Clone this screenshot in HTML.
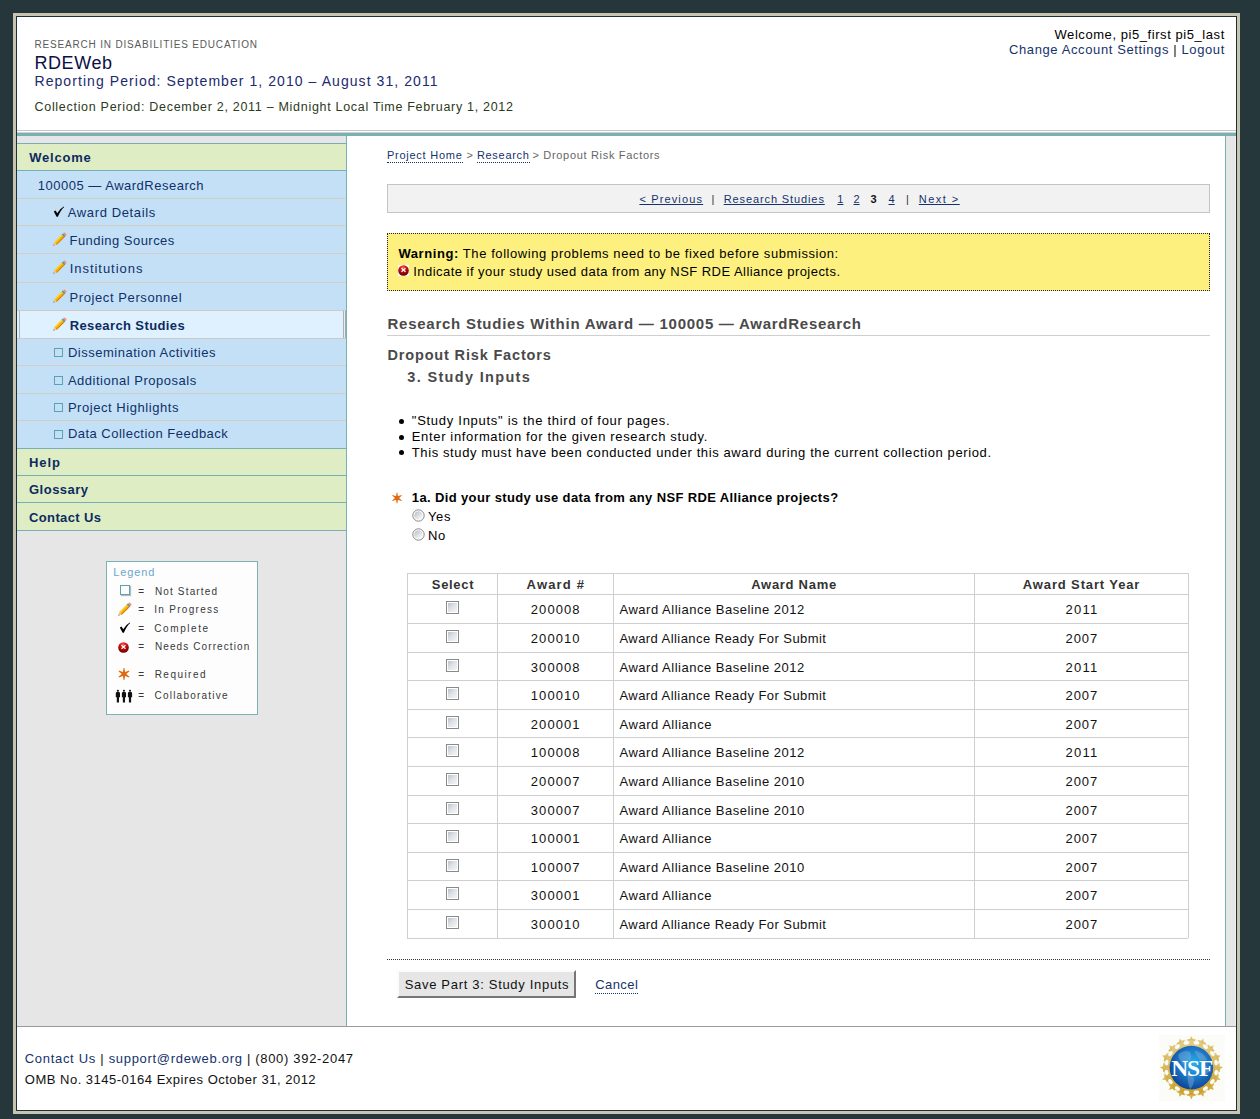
<!DOCTYPE html>
<html><head><meta charset="utf-8">
<style>
html,body{margin:0;padding:0;}
body{width:1260px;height:1119px;background:#25373b;position:relative;overflow:hidden;font-family:"Liberation Sans",sans-serif;}
.a{position:absolute;}
.t{position:absolute;white-space:pre;font-family:"Liberation Sans",sans-serif;}
.sep{position:absolute;left:17px;width:329px;height:1px;background:#d4cdc3;}
.tl{position:absolute;left:17px;width:329px;height:1px;background:#77b0b4;}
.cb{position:absolute;left:446px;width:11px;height:11px;border:1px solid #888b8b;background:#fff;}
.cb:after{content:"";position:absolute;left:1px;top:1px;width:9px;height:9px;background:linear-gradient(135deg,#bcc2cc,#dfe2e6 45%,#f5f5f5);}
.rl{position:absolute;left:407px;width:781px;height:1px;background:#cfcfcf;}
.cl{position:absolute;top:573px;width:1px;height:365px;background:#cfcfcf;}
</style></head><body>
<!-- page frame -->
<div class="a" style="left:13px;top:13px;width:1227px;height:1101px;background:#c7c4b1;"></div>
<div class="a" style="left:16px;top:16px;width:1221px;height:1095px;background:#1d3035;"></div>
<div class="a" style="left:17px;top:17px;width:1219px;height:1093px;background:#fff;"></div>
<!-- header lines -->
<div class="a" style="left:17px;top:130px;width:1219px;height:1px;background:#c6c6c6;"></div>
<div class="a" style="left:17px;top:132px;width:1219px;height:1px;background:#d6cfcf;"></div>
<div class="a" style="left:17px;top:133px;width:1219px;height:3px;background:#77b1b4;"></div>
<!-- main area -->
<div class="a" style="left:17px;top:136px;width:1219px;height:890px;background:#e6e6e6;"></div>
<div class="a" style="left:346px;top:136px;width:1px;height:890px;background:#77b1b4;"></div>
<div class="a" style="left:347px;top:136px;width:878px;height:890px;background:#fff;"></div>
<div class="a" style="left:1225px;top:136px;width:1px;height:890px;background:#77b1b4;"></div>
<div class="a" style="left:1235px;top:136px;width:1px;height:890px;background:#f2eeee;"></div>
<!-- footer line -->
<div class="a" style="left:17px;top:1026px;width:1219px;height:1px;background:#9a9a9a;"></div>

<!-- sidebar -->
<div class="a" style="left:17px;top:144px;width:329px;height:26px;background:#dfedc5;"></div>
<div class="a" style="left:17px;top:171px;width:329px;height:277px;background:#c3e0f6;"></div>
<div class="a" style="left:17px;top:449px;width:329px;height:81px;background:#dfedc5;"></div>
<div class="tl" style="top:143px"></div>
<div class="tl" style="top:170px"></div>
<div class="tl" style="top:448px"></div>
<div class="tl" style="top:475px"></div>
<div class="tl" style="top:502px"></div>
<div class="tl" style="top:530px"></div>
<div class="sep" style="top:198px"></div>
<div class="sep" style="top:225px"></div>
<div class="sep" style="top:253px"></div>
<div class="sep" style="top:282px"></div>
<div class="sep" style="top:365px"></div>
<div class="sep" style="top:393px"></div>
<div class="sep" style="top:420px"></div>
<!-- active row -->
<div class="a" style="left:17px;top:310px;width:329px;height:29px;background:#dff0fe;"></div>
<div class="a" style="left:17px;top:310px;width:329px;height:1px;background:#cfcac4;"></div>
<div class="a" style="left:17px;top:338px;width:329px;height:1px;background:#cfcac4;"></div>
<div class="a" style="left:19px;top:311px;width:1px;height:27px;background:#b4b4b4;"></div>
<div class="a" style="left:343px;top:311px;width:1px;height:27px;background:#b0b0b0;"></div>
<div class="a" style="left:345px;top:311px;width:1px;height:27px;background:#a8a8a8;"></div>

<!-- sidebar icons -->
<svg class="a" style="left:53px;top:206px" width="12" height="12" viewBox="0 0 12 12"><path d="M0.8 5.6 L2.6 4.6 L4.2 7.2 Q6.8 2.6 10.8 0.4 L11.2 1.0 Q7.6 4.2 4.9 10.8 L3.6 10.8 Z" fill="#000"/></svg>
<svg class="a" style="left:52.5px;top:231.5px" width="14" height="14" viewBox="0 0 14 14">
<g transform="translate(7,7) rotate(-45)">
<path d="M-9.4 0 L-6.4 -1.8 L-6.4 1.8 Z" fill="#e6c8a0"/>
<path d="M-9.4 0 L-8.2 -0.75 L-8.2 0.75 Z" fill="#707070"/>
<rect x="-6.4" y="-1.8" width="10.8" height="3.6" fill="#f5b400"/>
<rect x="-6.4" y="-1.8" width="10.8" height="1.0" fill="#ffd84a"/>
<rect x="-6.4" y="0.9" width="10.8" height="0.9" fill="#d8780c"/>
<rect x="4.4" y="-1.8" width="1.5" height="3.6" fill="#4a8ea0"/>
<rect x="5.8" y="-1.8" width="2.2" height="3.6" rx="1.2" fill="#f0906a"/>
</g></svg><svg class="a" style="left:52.5px;top:260px" width="14" height="14" viewBox="0 0 14 14">
<g transform="translate(7,7) rotate(-45)">
<path d="M-9.4 0 L-6.4 -1.8 L-6.4 1.8 Z" fill="#e6c8a0"/>
<path d="M-9.4 0 L-8.2 -0.75 L-8.2 0.75 Z" fill="#707070"/>
<rect x="-6.4" y="-1.8" width="10.8" height="3.6" fill="#f5b400"/>
<rect x="-6.4" y="-1.8" width="10.8" height="1.0" fill="#ffd84a"/>
<rect x="-6.4" y="0.9" width="10.8" height="0.9" fill="#d8780c"/>
<rect x="4.4" y="-1.8" width="1.5" height="3.6" fill="#4a8ea0"/>
<rect x="5.8" y="-1.8" width="2.2" height="3.6" rx="1.2" fill="#f0906a"/>
</g></svg><svg class="a" style="left:52.5px;top:288.5px" width="14" height="14" viewBox="0 0 14 14">
<g transform="translate(7,7) rotate(-45)">
<path d="M-9.4 0 L-6.4 -1.8 L-6.4 1.8 Z" fill="#e6c8a0"/>
<path d="M-9.4 0 L-8.2 -0.75 L-8.2 0.75 Z" fill="#707070"/>
<rect x="-6.4" y="-1.8" width="10.8" height="3.6" fill="#f5b400"/>
<rect x="-6.4" y="-1.8" width="10.8" height="1.0" fill="#ffd84a"/>
<rect x="-6.4" y="0.9" width="10.8" height="0.9" fill="#d8780c"/>
<rect x="4.4" y="-1.8" width="1.5" height="3.6" fill="#4a8ea0"/>
<rect x="5.8" y="-1.8" width="2.2" height="3.6" rx="1.2" fill="#f0906a"/>
</g></svg><svg class="a" style="left:52.5px;top:317px" width="14" height="14" viewBox="0 0 14 14">
<g transform="translate(7,7) rotate(-45)">
<path d="M-9.4 0 L-6.4 -1.8 L-6.4 1.8 Z" fill="#e6c8a0"/>
<path d="M-9.4 0 L-8.2 -0.75 L-8.2 0.75 Z" fill="#707070"/>
<rect x="-6.4" y="-1.8" width="10.8" height="3.6" fill="#f5b400"/>
<rect x="-6.4" y="-1.8" width="10.8" height="1.0" fill="#ffd84a"/>
<rect x="-6.4" y="0.9" width="10.8" height="0.9" fill="#d8780c"/>
<rect x="4.4" y="-1.8" width="1.5" height="3.6" fill="#4a8ea0"/>
<rect x="5.8" y="-1.8" width="2.2" height="3.6" rx="1.2" fill="#f0906a"/>
</g></svg>

<!-- legend -->
<div class="a" style="left:106px;top:561px;width:150px;height:152px;border:1px solid #7ab2b8;background:#fdfdfd;"></div>

<!-- content boxes -->
<div class="a" style="left:387px;top:184px;width:821px;height:27px;border:1px solid #c4c4c4;background:#f2f2f2;"></div>
<div class="a" style="left:387px;top:233px;width:821px;height:56px;border:1px dotted #222;background:#fdf07f;"></div>
<div class="a" style="left:387px;top:335px;width:823px;height:1px;background:#cfcfcf;"></div>

<!-- table -->
<div class="rl" style="top:573px"></div>
<div class="rl" style="top:594px"></div><div class="rl" style="top:623px"></div><div class="rl" style="top:652px"></div><div class="rl" style="top:680px"></div><div class="rl" style="top:709px"></div><div class="rl" style="top:737px"></div><div class="rl" style="top:766px"></div><div class="rl" style="top:795px"></div><div class="rl" style="top:823px"></div><div class="rl" style="top:852px"></div><div class="rl" style="top:880px"></div><div class="rl" style="top:909px"></div><div class="rl" style="top:938px"></div>
<div class="cl" style="left:407px"></div>
<div class="cl" style="left:497px"></div>
<div class="cl" style="left:613px"></div>
<div class="cl" style="left:974px"></div>
<div class="cl" style="left:1188px"></div>
<div class="cb" style="top:601px"></div><div class="cb" style="top:630px"></div><div class="cb" style="top:659px"></div><div class="cb" style="top:687px"></div><div class="cb" style="top:716px"></div><div class="cb" style="top:744px"></div><div class="cb" style="top:773px"></div><div class="cb" style="top:802px"></div><div class="cb" style="top:830px"></div><div class="cb" style="top:859px"></div><div class="cb" style="top:887px"></div><div class="cb" style="top:916px"></div>

<!-- dotted line -->
<div class="a" style="left:387px;top:959px;width:823px;height:0;border-top:1px dotted #333;"></div>
<!-- button -->
<div class="a" style="left:397px;top:970px;width:175px;height:24px;border-style:solid;border-width:2px;border-color:#fbfbfb #767676 #767676 #fbfbfb;background:#e6e6e6;"></div>

<div class="a" style="left:54px;top:348px;width:7px;height:7px;border:1px solid #5aa3ad;"></div>
<div class="a" style="left:54px;top:375.5px;width:7px;height:7px;border:1px solid #5aa3ad;"></div>
<div class="a" style="left:54px;top:403px;width:7px;height:7px;border:1px solid #5aa3ad;"></div>
<div class="a" style="left:54px;top:430px;width:7px;height:7px;border:1px solid #5aa3ad;"></div>
<svg class="a" style="left:398px;top:265px" width="11" height="11" viewBox="0 0 11 11">
<defs><radialGradient id="rg398265" cx="0.45" cy="0.25" r="0.8"><stop offset="0" stop-color="#ff6a6a"/><stop offset="0.35" stop-color="#d41212"/><stop offset="0.75" stop-color="#8a0202"/><stop offset="1" stop-color="#4a0000"/></radialGradient></defs>
<rect width="11" height="11" fill="#fff"/><circle cx="5.5" cy="5.5" r="5.3" fill="url(#rg398265)"/>
<path d="M3.5 3.3 L7.5 6.7 M7.5 3.3 L3.5 6.7" stroke="#fff" stroke-width="1.2"/></svg>
<svg class="a" style="left:389.4px;top:490.3px" width="16" height="16" viewBox="-8 -8 16 16"><g fill="#e06a10"><polygon points="0.30,-5.40 1.30,0.00 0.30,5.40 -0.30,5.40 -1.30,-0.00 -0.30,-5.40"/><polygon points="4.83,-2.44 0.65,1.13 -4.53,2.96 -4.83,2.44 -0.65,-1.13 4.53,-2.96"/><polygon points="4.53,2.96 -0.65,1.13 -4.83,-2.44 -4.53,-2.96 0.65,-1.13 4.83,2.44"/><circle r="1.95"/></g></svg>
<svg class="a" style="left:412.0px;top:509.0px" width="13" height="13" viewBox="0 0 13 13">
<defs><linearGradient id="rd515.5" x1="0.2" y1="0.15" x2="0.8" y2="0.85"><stop offset="0" stop-color="#c3c8d0"/><stop offset="1" stop-color="#f7f7f7"/></linearGradient></defs>
<circle cx="6.5" cy="6.5" r="5.7" fill="#fff" stroke="#878787" stroke-width="1"/>
<circle cx="6.5" cy="6.5" r="4.3" fill="url(#rd515.5)"/></svg>
<svg class="a" style="left:412.0px;top:528.0px" width="13" height="13" viewBox="0 0 13 13">
<defs><linearGradient id="rd534.5" x1="0.2" y1="0.15" x2="0.8" y2="0.85"><stop offset="0" stop-color="#c3c8d0"/><stop offset="1" stop-color="#f7f7f7"/></linearGradient></defs>
<circle cx="6.5" cy="6.5" r="5.7" fill="#fff" stroke="#878787" stroke-width="1"/>
<circle cx="6.5" cy="6.5" r="4.3" fill="url(#rd534.5)"/></svg>
<div class="a" style="left:399.4px;top:418.7px;width:5px;height:5px;border-radius:50%;background:#000;"></div>
<div class="a" style="left:399.4px;top:434.5px;width:5px;height:5px;border-radius:50%;background:#000;"></div>
<div class="a" style="left:399.4px;top:450.3px;width:5px;height:5px;border-radius:50%;background:#000;"></div>
<div class="a" style="left:120px;top:585px;width:8px;height:8px;border:1px solid #5aa3ad;box-shadow:1px 1px 1px #bbb;"></div>
<svg class="a" style="left:117.5px;top:602px" width="14" height="14" viewBox="0 0 14 14">
<g transform="translate(7,7) rotate(-45)">
<path d="M-9.4 0 L-6.4 -1.8 L-6.4 1.8 Z" fill="#e6c8a0"/>
<path d="M-9.4 0 L-8.2 -0.75 L-8.2 0.75 Z" fill="#707070"/>
<rect x="-6.4" y="-1.8" width="10.8" height="3.6" fill="#f5b400"/>
<rect x="-6.4" y="-1.8" width="10.8" height="1.0" fill="#ffd84a"/>
<rect x="-6.4" y="0.9" width="10.8" height="0.9" fill="#d8780c"/>
<rect x="4.4" y="-1.8" width="1.5" height="3.6" fill="#4a8ea0"/>
<rect x="5.8" y="-1.8" width="2.2" height="3.6" rx="1.2" fill="#f0906a"/>
</g></svg>
<svg class="a" style="left:118.5px;top:622px" width="12" height="12" viewBox="0 0 12 12"><path d="M0.8 5.6 L2.6 4.6 L4.2 7.2 Q6.8 2.6 10.8 0.4 L11.2 1.0 Q7.6 4.2 4.9 10.8 L3.6 10.8 Z" fill="#000"/></svg>
<svg class="a" style="left:118px;top:642px" width="11" height="11" viewBox="0 0 11 11">
<defs><radialGradient id="rg118642" cx="0.45" cy="0.25" r="0.8"><stop offset="0" stop-color="#ff6a6a"/><stop offset="0.35" stop-color="#d41212"/><stop offset="0.75" stop-color="#8a0202"/><stop offset="1" stop-color="#4a0000"/></radialGradient></defs>
<circle cx="5.5" cy="5.5" r="5.3" fill="url(#rg118642)"/>
<path d="M3.5 3.3 L7.5 6.7 M7.5 3.3 L3.5 6.7" stroke="#fff" stroke-width="1.2"/></svg>
<svg class="a" style="left:115.5px;top:666.3px" width="16" height="16" viewBox="-8 -8 16 16"><g fill="#e06a10"><polygon points="0.40,-6.10 1.50,0.00 0.40,6.10 -0.40,6.10 -1.50,-0.00 -0.40,-6.10"/><polygon points="5.48,-2.70 0.75,1.30 -5.08,3.40 -5.48,2.70 -0.75,-1.30 5.08,-3.40"/><polygon points="5.08,3.40 -0.75,1.30 -5.48,-2.70 -5.08,-3.40 0.75,-1.30 5.48,2.70"/><circle r="2.25"/></g></svg>
<svg class="a" style="left:115px;top:689.3px" width="19" height="14" viewBox="0 0 19 14"><g fill="#111"><ellipse cx="2.9" cy="1.7" rx="1.1" ry="1.0"/><path d="M0.7999999999999998 4.2 Q0.7999999999999998 3.1 1.9 3.1 H3.9 Q5.0 3.1 5.0 4.2 V8.3 H4.0 V13.4 H1.7999999999999998 V8.3 H0.7999999999999998 Z"/><ellipse cx="8.95" cy="1.7" rx="1.1" ry="1.0"/><path d="M6.85 4.2 Q6.85 3.1 7.949999999999999 3.1 H9.95 Q11.049999999999999 3.1 11.049999999999999 4.2 V8.3 H10.049999999999999 V13.4 H7.85 V8.3 H6.85 Z"/><ellipse cx="15.0" cy="1.7" rx="1.1" ry="1.0"/><path d="M12.9 4.2 Q12.9 3.1 14.0 3.1 H16.0 Q17.1 3.1 17.1 4.2 V8.3 H16.1 V13.4 H13.9 V8.3 H12.9 Z"/></g></svg>
<div class="a" style="left:1159px;top:1035px;width:66px;height:66px;background:#fbfbf8;"></div>
<svg class="a" style="left:0;top:0" width="1260" height="1119">
<defs><linearGradient id="gold" x1="0" y1="0" x2="0" y2="1"><stop offset="0" stop-color="#e2cc8a"/><stop offset="0.5" stop-color="#d8b95a"/><stop offset="1" stop-color="#c9a02a"/></linearGradient>
<radialGradient id="glb" cx="0.55" cy="0.4" r="0.65"><stop offset="0" stop-color="#22b4ec"/><stop offset="0.5" stop-color="#1c78c8"/><stop offset="1" stop-color="#0d3c8e"/></radialGradient></defs>
<g fill="url(#gold)"><polygon points="1191.40,1036.00 1192.81,1039.06 1196.16,1039.45 1193.68,1041.74 1194.34,1045.05 1191.40,1043.40 1188.46,1045.05 1189.12,1041.74 1186.64,1039.45 1189.99,1039.06"/><polygon points="1203.49,1038.41 1203.63,1041.77 1206.56,1043.42 1203.40,1044.58 1202.75,1047.89 1200.66,1045.24 1197.32,1045.64 1199.19,1042.84 1197.78,1039.78 1201.02,1040.69"/><polygon points="1213.74,1045.26 1212.58,1048.42 1214.66,1051.06 1211.30,1050.93 1209.43,1053.73 1208.51,1050.49 1205.27,1049.57 1208.07,1047.70 1207.94,1044.34 1210.58,1046.42"/><polygon points="1220.59,1055.51 1218.31,1057.98 1219.22,1061.22 1216.16,1059.81 1213.36,1061.68 1213.76,1058.34 1211.11,1056.25 1214.42,1055.60 1215.58,1052.44 1217.23,1055.37"/><polygon points="1223.00,1067.60 1219.94,1069.01 1219.55,1072.36 1217.26,1069.88 1213.95,1070.54 1215.60,1067.60 1213.95,1064.66 1217.26,1065.32 1219.55,1062.84 1219.94,1066.19"/><polygon points="1220.59,1079.69 1217.23,1079.83 1215.58,1082.76 1214.42,1079.60 1211.11,1078.95 1213.76,1076.86 1213.36,1073.52 1216.16,1075.39 1219.22,1073.98 1218.31,1077.22"/><polygon points="1213.74,1089.94 1210.58,1088.78 1207.94,1090.86 1208.07,1087.50 1205.27,1085.63 1208.51,1084.71 1209.43,1081.47 1211.30,1084.27 1214.66,1084.14 1212.58,1086.78"/><polygon points="1203.49,1096.79 1201.02,1094.51 1197.78,1095.42 1199.19,1092.36 1197.32,1089.56 1200.66,1089.96 1202.75,1087.31 1203.40,1090.62 1206.56,1091.78 1203.63,1093.43"/><polygon points="1191.40,1099.20 1189.99,1096.14 1186.64,1095.75 1189.12,1093.46 1188.46,1090.15 1191.40,1091.80 1194.34,1090.15 1193.68,1093.46 1196.16,1095.75 1192.81,1096.14"/><polygon points="1179.31,1096.79 1179.17,1093.43 1176.24,1091.78 1179.40,1090.62 1180.05,1087.31 1182.14,1089.96 1185.48,1089.56 1183.61,1092.36 1185.02,1095.42 1181.78,1094.51"/><polygon points="1169.06,1089.94 1170.22,1086.78 1168.14,1084.14 1171.50,1084.27 1173.37,1081.47 1174.29,1084.71 1177.53,1085.63 1174.73,1087.50 1174.86,1090.86 1172.22,1088.78"/><polygon points="1162.21,1079.69 1164.49,1077.22 1163.58,1073.98 1166.64,1075.39 1169.44,1073.52 1169.04,1076.86 1171.69,1078.95 1168.38,1079.60 1167.22,1082.76 1165.57,1079.83"/><polygon points="1159.80,1067.60 1162.86,1066.19 1163.25,1062.84 1165.54,1065.32 1168.85,1064.66 1167.20,1067.60 1168.85,1070.54 1165.54,1069.88 1163.25,1072.36 1162.86,1069.01"/><polygon points="1162.21,1055.51 1165.57,1055.37 1167.22,1052.44 1168.38,1055.60 1171.69,1056.25 1169.04,1058.34 1169.44,1061.68 1166.64,1059.81 1163.58,1061.22 1164.49,1057.98"/><polygon points="1169.06,1045.26 1172.22,1046.42 1174.86,1044.34 1174.73,1047.70 1177.53,1049.57 1174.29,1050.49 1173.37,1053.73 1171.50,1050.93 1168.14,1051.06 1170.22,1048.42"/><polygon points="1179.31,1038.41 1181.78,1040.69 1185.02,1039.78 1183.61,1042.84 1185.48,1045.64 1182.14,1045.24 1180.05,1047.89 1179.40,1044.58 1176.24,1043.42 1179.17,1041.77"/><circle cx="1191.4" cy="1067.6" r="27.4"/></g>
<g fill="#fbfbf8"><ellipse cx="1196.32" cy="1042.88" rx="2.9" ry="1.8" transform="rotate(11.2 1196.32 1042.88)"/><ellipse cx="1205.40" cy="1046.65" rx="2.9" ry="1.8" transform="rotate(33.8 1205.40 1046.65)"/><ellipse cx="1212.35" cy="1053.60" rx="2.9" ry="1.8" transform="rotate(56.2 1212.35 1053.60)"/><ellipse cx="1216.12" cy="1062.68" rx="2.9" ry="1.8" transform="rotate(78.8 1216.12 1062.68)"/><ellipse cx="1216.12" cy="1072.52" rx="2.9" ry="1.8" transform="rotate(101.2 1216.12 1072.52)"/><ellipse cx="1212.35" cy="1081.60" rx="2.9" ry="1.8" transform="rotate(123.8 1212.35 1081.60)"/><ellipse cx="1205.40" cy="1088.55" rx="2.9" ry="1.8" transform="rotate(146.2 1205.40 1088.55)"/><ellipse cx="1196.32" cy="1092.32" rx="2.9" ry="1.8" transform="rotate(168.8 1196.32 1092.32)"/><ellipse cx="1186.48" cy="1092.32" rx="2.9" ry="1.8" transform="rotate(191.2 1186.48 1092.32)"/><ellipse cx="1177.40" cy="1088.55" rx="2.9" ry="1.8" transform="rotate(213.8 1177.40 1088.55)"/><ellipse cx="1170.45" cy="1081.60" rx="2.9" ry="1.8" transform="rotate(236.2 1170.45 1081.60)"/><ellipse cx="1166.68" cy="1072.52" rx="2.9" ry="1.8" transform="rotate(258.8 1166.68 1072.52)"/><ellipse cx="1166.68" cy="1062.68" rx="2.9" ry="1.8" transform="rotate(281.2 1166.68 1062.68)"/><ellipse cx="1170.45" cy="1053.60" rx="2.9" ry="1.8" transform="rotate(303.8 1170.45 1053.60)"/><ellipse cx="1177.40" cy="1046.65" rx="2.9" ry="1.8" transform="rotate(326.2 1177.40 1046.65)"/><ellipse cx="1186.48" cy="1042.88" rx="2.9" ry="1.8" transform="rotate(348.8 1186.48 1042.88)"/></g>
<circle cx="1191.4" cy="1067.6" r="21.8" fill="url(#glb)"/>
<g fill="#8fb6dc" opacity="0.4">
<path d="M1178.4 1054.6 q5 -5 11 -3 q3 3 1 8 q-3 2 -5 6 q-3 -1 -4 -4 q-3 -2 -3 -7 z"/>
<path d="M1194.4 1050.6 q8 1 13 9 q-4 2 -8 0 q-3 -3 -5 -9 z"/>
<path d="M1187.4 1073.6 q6 1 7 6 q-1 6 -4 10 q-3 -6 -3 -16 z"/>
<path d="M1201.4 1063.6 q6 2 8 8 q-4 4 -6 2 q-3 -4 -2 -10 z"/>
</g>
<text x="1191.7" y="1075.8" text-anchor="middle" font-family="Liberation Serif" font-weight="bold" font-size="23.5" fill="#fff" letter-spacing="-1.2">NSF</text>
</svg>
<div class="t" style="left:34.50px;top:39px;font-size:10px;line-height:12px;color:#5a5a5a;letter-spacing:0.821px;">RESEARCH IN DISABILITIES EDUCATION</div>
<div class="t" style="left:34.50px;top:52px;font-size:18px;line-height:22px;color:#0d1046;letter-spacing:0.559px;">RDEWeb</div>
<div class="t" style="left:34.50px;top:73px;font-size:14px;line-height:17px;color:#1c2a6e;letter-spacing:1.064px;">Reporting Period: September 1, 2010 – August 31, 2011</div>
<div class="t" style="left:34.50px;top:100px;font-size:12.5px;line-height:15px;color:#2b3a20;letter-spacing:0.704px;">Collection Period: December 2, 2011 – Midnight Local Time February 1, 2012</div>
<div class="t" style="left:1054.50px;top:27px;font-size:13px;line-height:16px;color:#000;letter-spacing:0.565px;">Welcome, pi5_first pi5_last</div>
<div class="t" style="left:1009.00px;top:42px;font-size:13px;line-height:16px;color:#15336b;letter-spacing:0.610px;">Change Account Settings <span style="color:#111">|</span> Logout</div>
<div class="t" style="left:29.20px;top:150px;font-size:13px;line-height:16px;color:#0c2b5e;letter-spacing:0.793px;font-weight:bold;">Welcome</div>
<div class="t" style="left:37.80px;top:178px;font-size:13px;line-height:16px;color:#10306a;letter-spacing:0.503px;">100005 — AwardResearch</div>
<div class="t" style="left:67.80px;top:205px;font-size:13px;line-height:16px;color:#10306a;letter-spacing:0.619px;">Award Details</div>
<div class="t" style="left:69.50px;top:233px;font-size:13px;line-height:16px;color:#10306a;letter-spacing:0.466px;">Funding Sources</div>
<div class="t" style="left:69.70px;top:261px;font-size:13px;line-height:16px;color:#10306a;letter-spacing:0.959px;">Institutions</div>
<div class="t" style="left:69.50px;top:290px;font-size:13px;line-height:16px;color:#10306a;letter-spacing:0.592px;">Project Personnel</div>
<div class="t" style="left:69.70px;top:318px;font-size:13px;line-height:16px;color:#0c2b5e;letter-spacing:0.393px;font-weight:bold;">Research Studies</div>
<div class="t" style="left:67.90px;top:345px;font-size:13px;line-height:16px;color:#10306a;letter-spacing:0.507px;">Dissemination Activities</div>
<div class="t" style="left:67.90px;top:373px;font-size:13px;line-height:16px;color:#10306a;letter-spacing:0.514px;">Additional Proposals</div>
<div class="t" style="left:67.90px;top:400px;font-size:13px;line-height:16px;color:#10306a;letter-spacing:0.550px;">Project Highlights</div>
<div class="t" style="left:67.90px;top:426px;font-size:13px;line-height:16px;color:#10306a;letter-spacing:0.480px;">Data Collection Feedback</div>
<div class="t" style="left:29.00px;top:455px;font-size:13px;line-height:16px;color:#0c2b5e;letter-spacing:0.943px;font-weight:bold;">Help</div>
<div class="t" style="left:29.00px;top:482px;font-size:13px;line-height:16px;color:#0c2b5e;letter-spacing:0.492px;font-weight:bold;">Glossary</div>
<div class="t" style="left:29.00px;top:510px;font-size:13px;line-height:16px;color:#0c2b5e;letter-spacing:0.375px;font-weight:bold;">Contact Us</div>
<div class="t" style="left:113.20px;top:566px;font-size:11px;line-height:13px;color:#6aa7ce;letter-spacing:0.896px;">Legend</div>
<div class="t" style="left:154.90px;top:586px;font-size:10px;line-height:12px;color:#383838;letter-spacing:1.161px;">Not Started</div>
<div class="t" style="left:154.30px;top:604px;font-size:10px;line-height:12px;color:#383838;letter-spacing:1.286px;">In Progress</div>
<div class="t" style="left:154.30px;top:623px;font-size:10px;line-height:12px;color:#383838;letter-spacing:1.584px;">Complete</div>
<div class="t" style="left:154.90px;top:641px;font-size:10px;line-height:12px;color:#383838;letter-spacing:1.106px;">Needs Correction</div>
<div class="t" style="left:154.70px;top:669px;font-size:10px;line-height:12px;color:#383838;letter-spacing:1.458px;">Required</div>
<div class="t" style="left:154.50px;top:690px;font-size:10px;line-height:12px;color:#383838;letter-spacing:1.219px;">Collaborative</div>
<div class="t" style="left:138.20px;top:586px;font-size:10px;line-height:12px;color:#383838;letter-spacing:0.000px;">=</div>
<div class="t" style="left:138.20px;top:604px;font-size:10px;line-height:12px;color:#383838;letter-spacing:0.000px;">=</div>
<div class="t" style="left:138.20px;top:623px;font-size:10px;line-height:12px;color:#383838;letter-spacing:0.000px;">=</div>
<div class="t" style="left:138.20px;top:641px;font-size:10px;line-height:12px;color:#383838;letter-spacing:0.000px;">=</div>
<div class="t" style="left:138.20px;top:669px;font-size:10px;line-height:12px;color:#383838;letter-spacing:0.000px;">=</div>
<div class="t" style="left:138.20px;top:690px;font-size:10px;line-height:12px;color:#383838;letter-spacing:0.000px;">=</div>
<div class="t" style="left:386.90px;top:149px;font-size:11px;line-height:13px;color:#15336b;letter-spacing:0.751px;border-bottom:1px dotted #15336b;">Project Home</div>
<div class="t" style="left:466.50px;top:149px;font-size:11px;line-height:13px;color:#666;letter-spacing:0.000px;">&gt;</div>
<div class="t" style="left:476.90px;top:149px;font-size:11px;line-height:13px;color:#15336b;letter-spacing:0.703px;border-bottom:1px dotted #15336b;">Research</div>
<div class="t" style="left:532.50px;top:149px;font-size:11px;line-height:13px;color:#666;letter-spacing:0.681px;">&gt; Dropout Risk Factors</div>
<div class="t" style="left:639.40px;top:193px;font-size:11px;line-height:13px;color:#14336c;letter-spacing:1.147px;text-decoration:underline;text-underline-offset:1px;">&lt; Previous</div>
<div class="t" style="left:711.50px;top:193px;font-size:11px;line-height:13px;color:#333;letter-spacing:0.000px;">|</div>
<div class="t" style="left:723.70px;top:193px;font-size:11px;line-height:13px;color:#14336c;letter-spacing:0.891px;text-decoration:underline;text-underline-offset:1px;">Research Studies</div>
<div class="t" style="left:837.30px;top:193px;font-size:11px;line-height:13px;color:#14336c;letter-spacing:0.000px;text-decoration:underline;text-underline-offset:1px;">1</div>
<div class="t" style="left:853.50px;top:193px;font-size:11px;line-height:13px;color:#14336c;letter-spacing:0.000px;text-decoration:underline;text-underline-offset:1px;">2</div>
<div class="t" style="left:870.50px;top:193px;font-size:11px;line-height:13px;color:#111;letter-spacing:0.000px;font-weight:bold;">3</div>
<div class="t" style="left:888.50px;top:193px;font-size:11px;line-height:13px;color:#14336c;letter-spacing:0.000px;text-decoration:underline;text-underline-offset:1px;">4</div>
<div class="t" style="left:906.00px;top:193px;font-size:11px;line-height:13px;color:#333;letter-spacing:0.000px;">|</div>
<div class="t" style="left:918.80px;top:193px;font-size:11px;line-height:13px;color:#14336c;letter-spacing:1.478px;text-decoration:underline;text-underline-offset:1px;">Next &gt;</div>
<div class="t" style="left:398.40px;top:246px;font-size:13px;line-height:16px;color:#000;letter-spacing:0.577px;"><b>Warning:</b> The following problems need to be fixed before submission:</div>
<div class="t" style="left:413.30px;top:264px;font-size:13px;line-height:16px;color:#000;letter-spacing:0.459px;">Indicate if your study used data from any NSF RDE Alliance projects.</div>
<div class="t" style="left:387.50px;top:315px;font-size:15px;line-height:18px;color:#4a4a4a;letter-spacing:0.741px;font-weight:bold;">Research Studies Within Award — 100005 — AwardResearch</div>
<div class="t" style="left:387.50px;top:347px;font-size:14.5px;line-height:17px;color:#4a4a4a;letter-spacing:0.835px;font-weight:bold;">Dropout Risk Factors</div>
<div class="t" style="left:407.30px;top:369px;font-size:14.5px;line-height:17px;color:#4a4a4a;letter-spacing:1.327px;font-weight:bold;">3. Study Inputs</div>
<div class="t" style="left:411.80px;top:413px;font-size:13px;line-height:16px;color:#000;letter-spacing:0.722px;">"Study Inputs" is the third of four pages.</div>
<div class="t" style="left:411.80px;top:429px;font-size:13px;line-height:16px;color:#000;letter-spacing:0.648px;">Enter information for the given research study.</div>
<div class="t" style="left:411.80px;top:445px;font-size:13px;line-height:16px;color:#000;letter-spacing:0.605px;">This study must have been conducted under this award during the current collection period.</div>
<div class="t" style="left:411.80px;top:490px;font-size:13px;line-height:16px;color:#000;letter-spacing:0.370px;font-weight:bold;">1a. Did your study use data from any NSF RDE Alliance projects?</div>
<div class="t" style="left:428.00px;top:509px;font-size:13px;line-height:16px;color:#000;letter-spacing:0.591px;">Yes</div>
<div class="t" style="left:428.00px;top:528px;font-size:13px;line-height:16px;color:#000;letter-spacing:0.675px;">No</div>
<div class="t" style="left:431.80px;top:577px;font-size:13px;line-height:16px;color:#333;letter-spacing:0.677px;font-weight:bold;">Select</div>
<div class="t" style="left:526.60px;top:577px;font-size:13px;line-height:16px;color:#333;letter-spacing:1.176px;font-weight:bold;">Award #</div>
<div class="t" style="left:751.20px;top:577px;font-size:13px;line-height:16px;color:#333;letter-spacing:0.720px;font-weight:bold;">Award Name</div>
<div class="t" style="left:1022.80px;top:577px;font-size:13px;line-height:16px;color:#333;letter-spacing:0.868px;font-weight:bold;">Award Start Year</div>
<div class="t" style="left:530.80px;top:602px;font-size:13px;line-height:16px;color:#111;letter-spacing:1.062px;">200008</div>
<div class="t" style="left:619.50px;top:602px;font-size:13px;line-height:16px;color:#111;letter-spacing:0.509px;">Award Alliance Baseline 2012</div>
<div class="t" style="left:1065.50px;top:602px;font-size:13px;line-height:16px;color:#111;letter-spacing:1.244px;">2011</div>
<div class="t" style="left:530.80px;top:631px;font-size:13px;line-height:16px;color:#111;letter-spacing:1.062px;">200010</div>
<div class="t" style="left:619.50px;top:631px;font-size:13px;line-height:16px;color:#111;letter-spacing:0.433px;">Award Alliance Ready For Submit</div>
<div class="t" style="left:1065.50px;top:631px;font-size:13px;line-height:16px;color:#111;letter-spacing:0.926px;">2007</div>
<div class="t" style="left:530.80px;top:660px;font-size:13px;line-height:16px;color:#111;letter-spacing:1.062px;">300008</div>
<div class="t" style="left:619.50px;top:660px;font-size:13px;line-height:16px;color:#111;letter-spacing:0.509px;">Award Alliance Baseline 2012</div>
<div class="t" style="left:1065.50px;top:660px;font-size:13px;line-height:16px;color:#111;letter-spacing:1.244px;">2011</div>
<div class="t" style="left:530.80px;top:688px;font-size:13px;line-height:16px;color:#111;letter-spacing:1.062px;">100010</div>
<div class="t" style="left:619.50px;top:688px;font-size:13px;line-height:16px;color:#111;letter-spacing:0.433px;">Award Alliance Ready For Submit</div>
<div class="t" style="left:1065.50px;top:688px;font-size:13px;line-height:16px;color:#111;letter-spacing:0.926px;">2007</div>
<div class="t" style="left:530.80px;top:717px;font-size:13px;line-height:16px;color:#111;letter-spacing:1.062px;">200001</div>
<div class="t" style="left:619.50px;top:717px;font-size:13px;line-height:16px;color:#111;letter-spacing:0.527px;">Award Alliance</div>
<div class="t" style="left:1065.50px;top:717px;font-size:13px;line-height:16px;color:#111;letter-spacing:0.926px;">2007</div>
<div class="t" style="left:530.80px;top:745px;font-size:13px;line-height:16px;color:#111;letter-spacing:1.062px;">100008</div>
<div class="t" style="left:619.50px;top:745px;font-size:13px;line-height:16px;color:#111;letter-spacing:0.509px;">Award Alliance Baseline 2012</div>
<div class="t" style="left:1065.50px;top:745px;font-size:13px;line-height:16px;color:#111;letter-spacing:1.244px;">2011</div>
<div class="t" style="left:530.80px;top:774px;font-size:13px;line-height:16px;color:#111;letter-spacing:1.062px;">200007</div>
<div class="t" style="left:619.50px;top:774px;font-size:13px;line-height:16px;color:#111;letter-spacing:0.509px;">Award Alliance Baseline 2010</div>
<div class="t" style="left:1065.50px;top:774px;font-size:13px;line-height:16px;color:#111;letter-spacing:0.926px;">2007</div>
<div class="t" style="left:530.80px;top:803px;font-size:13px;line-height:16px;color:#111;letter-spacing:1.062px;">300007</div>
<div class="t" style="left:619.50px;top:803px;font-size:13px;line-height:16px;color:#111;letter-spacing:0.509px;">Award Alliance Baseline 2010</div>
<div class="t" style="left:1065.50px;top:803px;font-size:13px;line-height:16px;color:#111;letter-spacing:0.926px;">2007</div>
<div class="t" style="left:530.80px;top:831px;font-size:13px;line-height:16px;color:#111;letter-spacing:1.062px;">100001</div>
<div class="t" style="left:619.50px;top:831px;font-size:13px;line-height:16px;color:#111;letter-spacing:0.527px;">Award Alliance</div>
<div class="t" style="left:1065.50px;top:831px;font-size:13px;line-height:16px;color:#111;letter-spacing:0.926px;">2007</div>
<div class="t" style="left:530.80px;top:860px;font-size:13px;line-height:16px;color:#111;letter-spacing:1.062px;">100007</div>
<div class="t" style="left:619.50px;top:860px;font-size:13px;line-height:16px;color:#111;letter-spacing:0.509px;">Award Alliance Baseline 2010</div>
<div class="t" style="left:1065.50px;top:860px;font-size:13px;line-height:16px;color:#111;letter-spacing:0.926px;">2007</div>
<div class="t" style="left:530.80px;top:888px;font-size:13px;line-height:16px;color:#111;letter-spacing:1.062px;">300001</div>
<div class="t" style="left:619.50px;top:888px;font-size:13px;line-height:16px;color:#111;letter-spacing:0.527px;">Award Alliance</div>
<div class="t" style="left:1065.50px;top:888px;font-size:13px;line-height:16px;color:#111;letter-spacing:0.926px;">2007</div>
<div class="t" style="left:530.80px;top:917px;font-size:13px;line-height:16px;color:#111;letter-spacing:1.062px;">300010</div>
<div class="t" style="left:619.50px;top:917px;font-size:13px;line-height:16px;color:#111;letter-spacing:0.433px;">Award Alliance Ready For Submit</div>
<div class="t" style="left:1065.50px;top:917px;font-size:13px;line-height:16px;color:#111;letter-spacing:0.926px;">2007</div>
<div class="t" style="left:404.70px;top:977px;font-size:13px;line-height:16px;color:#111;letter-spacing:0.687px;">Save Part 3: Study Inputs</div>
<div class="t" style="left:595.20px;top:977px;font-size:13px;line-height:16px;color:#15336b;letter-spacing:0.426px;border-bottom:1px dotted #15336b;">Cancel</div>
<div class="t" style="left:24.80px;top:1051px;font-size:13px;line-height:16px;color:#111;letter-spacing:0.687px;"><span style="color:#15336b">Contact Us</span> | <span style="color:#15336b">support@rdeweb.org</span> | (800) 392-2047</div>
<div class="t" style="left:24.80px;top:1072px;font-size:13px;line-height:16px;color:#111;letter-spacing:0.501px;">OMB No. 3145-0164 Expires October 31, 2012</div>
</body></html>
